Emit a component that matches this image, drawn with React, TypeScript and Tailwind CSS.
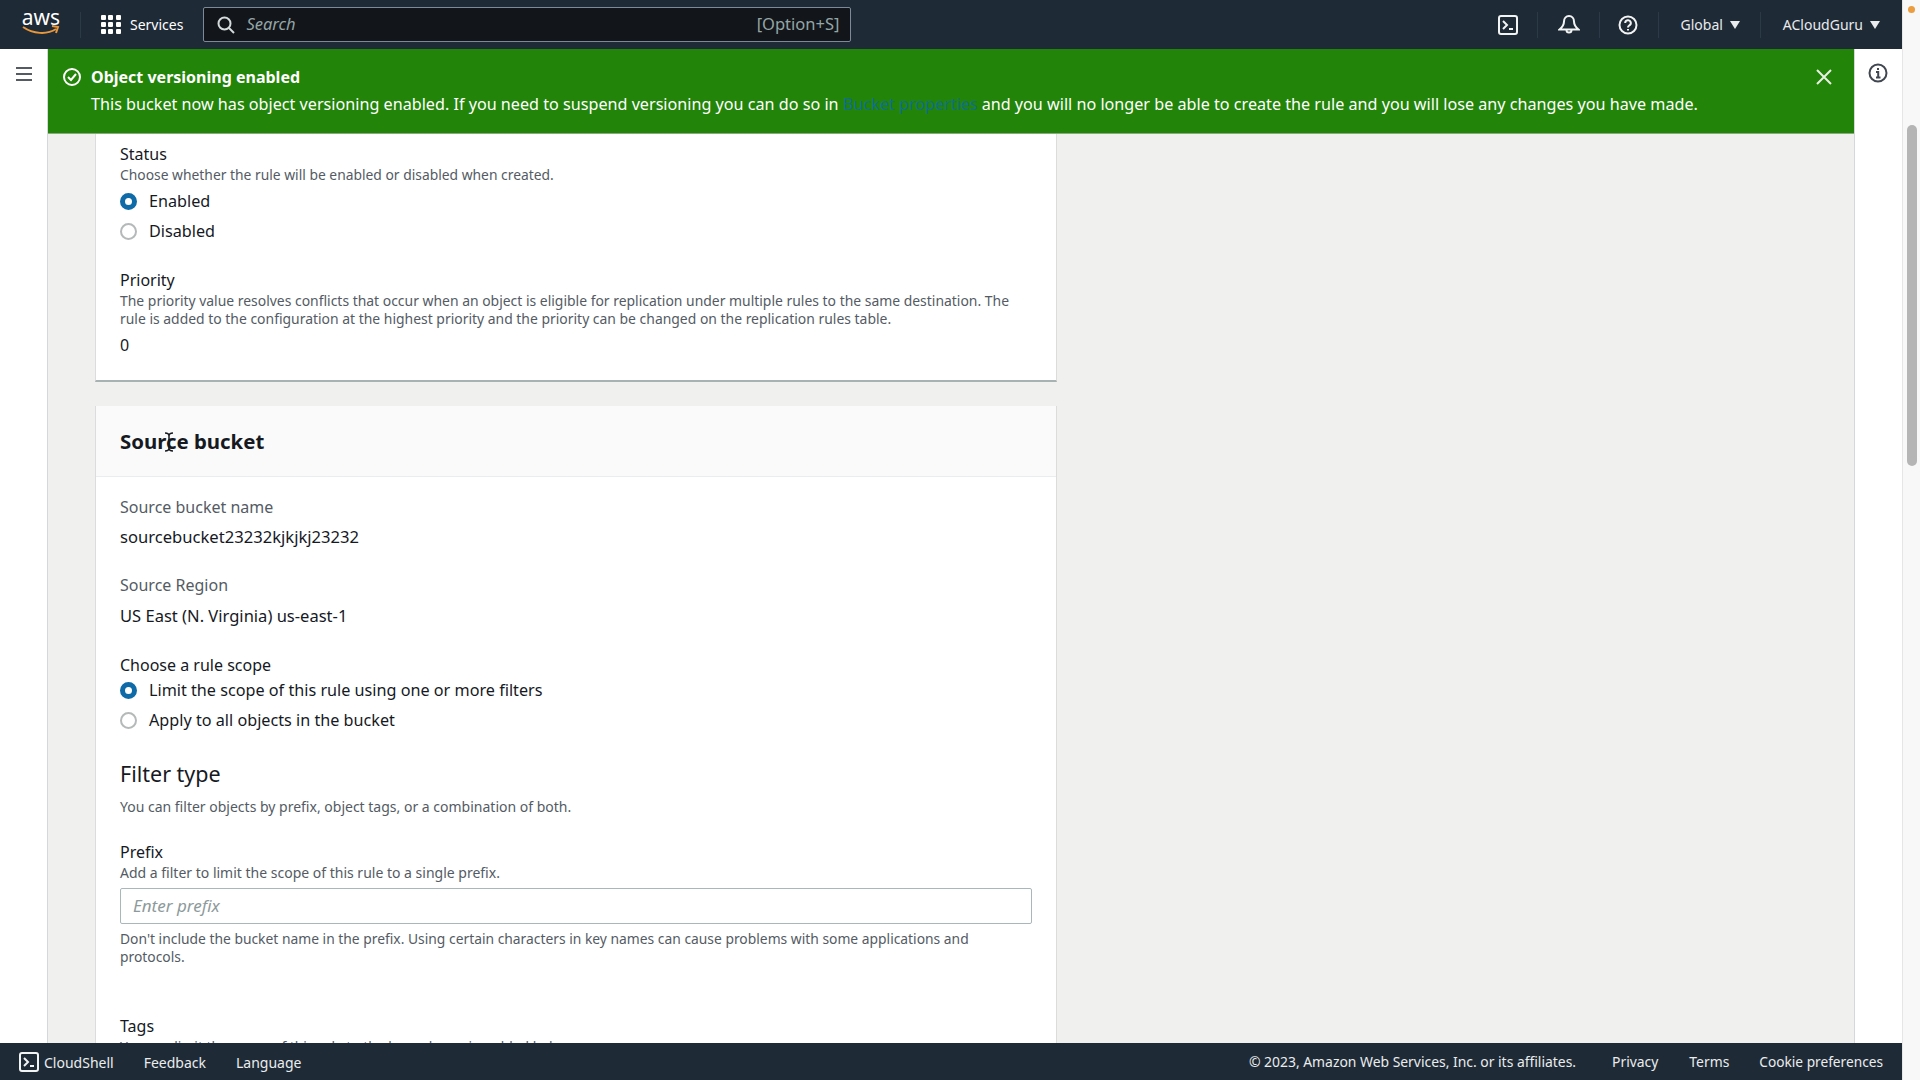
const font = "[font-family:'Noto_Sans',sans-serif]";

function Caret() {
  return (
    <svg width="10" height="8" viewBox="0 0 10 8" className="ml-[7px]">
      <path d="M0 0h10L5 8z" fill="currentColor" />
    </svg>
  );
}

function NavDivider() {
  return <div className="w-px h-[26px] bg-[#2c3947]" />;
}

function Radio({ checked, label }: { checked?: boolean; label: string }) {
  return (
    <div className="flex items-center h-[30px]">
      {checked ? (
        <span className="w-[17px] h-[17px] rounded-full border-[5px] border-[#0f6aa8] bg-white" />
      ) : (
        <span className="w-[17px] h-[17px] rounded-full border-2 border-[#b5b9b9] bg-white" />
      )}
      <span className="ml-[12px] text-[16.2px] leading-[20px] text-[#16191f]">{label}</span>
    </div>
  );
}

function TopNav() {
  return (
    <header className="h-[49px] shrink-0 flex items-center bg-[#1f2a37] text-[#e9ebed] mr-[18px]">
      <div className="w-[80px] flex flex-col items-center shrink-0 pl-[2px]">
        <span className="text-[21px] leading-[17px] text-white -mt-[5px]">aws</span>
        <svg width="38" height="10" viewBox="0 0 38 10" className="-mt-[1px]">
          <path d="M1 2c10 7 24 8 33 2" fill="none" stroke="#e8973a" strokeWidth="2" />
          <path d="M30 1l6 1-2 6" fill="none" stroke="#e8973a" strokeWidth="2" />
        </svg>
      </div>
      <div className="w-px h-[26px] bg-[#2c3947]" />
      <div className="ml-[20px] grid grid-cols-3 gap-[2px] w-[20px]">
        {Array.from({ length: 9 }).map((_, i) => (
          <span key={i} className="w-[5px] h-[5px] bg-white rounded-[1px]" />
        ))}
      </div>
      <span className="ml-[9px] text-[14px] text-white">Services</span>
      <div className="ml-[20px] w-[648px] h-[35px] flex items-center bg-[#12161a] border border-[#7d8998] rounded-[2px] pl-[13px] pr-[11px]">
        <svg width="18" height="18" viewBox="0 0 18 18" fill="none" stroke="#d5dbdb" strokeWidth="2">
          <circle cx="7.5" cy="7.5" r="6" />
          <path d="M12 12l5 5" />
        </svg>
        <span className="ml-[11px] text-[16.5px] italic text-[#95a5a6]">Search</span>
        <span className="ml-auto text-[16.5px] text-[#95a5a6]">[Option+S]</span>
      </div>
      <div className="ml-auto flex items-center">
        <svg width="20" height="20" viewBox="0 0 20 20" fill="none" stroke="#f2f3f3" strokeWidth="2">
          <rect x="1" y="1" width="18" height="18" rx="2" />
          <path d="M5 6l4 4-4 4M11 14h4" />
        </svg>
        <div className="ml-[19px] mr-[20px]"><NavDivider /></div>
        <svg width="22" height="22" viewBox="0 0 22 22" fill="none" stroke="#f2f3f3" strokeWidth="2">
          <path d="M11 2c-3 0-5 2.500-5 5.500 0 3.500-1.500 5.500-4.500 8h19c-3-2.500-4.500-4.500-4.500-8C16 4.500 14 2 11 2z" />
          <path d="M8.500 16a2.500 2.500 0 0 0 5 0" />
        </svg>
        <div className="ml-[19px] mr-[18px]"><NavDivider /></div>
        <svg width="20" height="20" viewBox="0 0 20 20" fill="none" stroke="#f2f3f3" strokeWidth="2">
          <circle cx="10" cy="10" r="8.500" />
          <path d="M7.200 8a2.800 2.800 0 1 1 4 2.500c-.8.500-1.200 1-1.200 2" />
          <path d="M10 14v1.500" />
        </svg>
        <div className="ml-[20px] mr-[22px]"><NavDivider /></div>
        <span className="text-[14px]">Global</span>
        <Caret />
        <div className="ml-[20px] mr-[22px]"><NavDivider /></div>
        <span className="text-[14px]">ACloudGuru</span>
        <Caret />
        <div className="w-[22px]" />
      </div>
    </header>
  );
}

function Banner() {
  return (
    <div className="h-[85px] shrink-0 bg-[#228408] text-white flex border-b border-[#8aa97f]">
      <div className="pl-[14px] pt-[18px]">
        <svg width="20" height="20" viewBox="0 0 20 20" fill="none" stroke="#fff" strokeWidth="2">
          <circle cx="10" cy="10" r="8" />
          <path d="M6 10l3 3 5-6" />
        </svg>
      </div>
      <div className="ml-[9px] pt-[18px] flex-1">
        <div className="text-[16px] leading-[20px] font-bold">Object versioning enabled</div>
        <div className="text-[16.16px] leading-[20px] mt-[7px]">
          This bucket now has object versioning enabled. If you need to suspend versioning you can do so in{" "}
          <span className="text-[#0f6f8c]">Bucket properties</span> and you will no longer be able to create the rule and you will lose any changes you have made.
        </div>
      </div>
      <div className="pt-[19px] pr-[21px]">
        <svg width="18" height="18" viewBox="0 0 18 18" fill="none" stroke="#e7f0e3" strokeWidth="2">
          <path d="M2 2l14 14M16 2L2 16" />
        </svg>
      </div>
    </div>
  );
}

function Content() {
  return (
    <div className="flex-1 min-h-0 overflow-hidden bg-[#f0f0ef] pl-[47px]">
      <div className="w-[962px]">
        <section className="bg-white border-l border-r border-[#dcdcdc] border-b-2 border-b-[#a9b2b3] px-[24px] pt-[9px] h-[248px]">
          <div className="text-[16px] leading-[22px] text-[#16191f]">Status</div>
          <div className="text-[13.85px] leading-[18px] text-[#545b64] mt-[1px]">Choose whether the rule will be enabled or disabled when created.</div>
          <div className="mt-[2px]">
            <Radio checked label="Enabled" />
            <Radio label="Disabled" />
          </div>
          <div className="text-[16px] leading-[22px] text-[#16191f] mt-[23px]">Priority</div>
          <div className="text-[13.93px] leading-[18px] text-[#545b64] mt-[1px] w-[900px]">
            The priority value resolves conflicts that occur when an object is eligible for replication under multiple rules to the same destination. The rule is added to the configuration at the highest priority and the priority can be changed on the replication rules table.
          </div>
          <div className="text-[16px] leading-[22px] text-[#16191f] mt-[6px]">0</div>
        </section>
        <section className="mt-[24px] bg-white border-l border-r border-[#dcdcdc]">
          <div className="h-[71px] flex items-center px-[24px] bg-[#fafafa] border-b border-[#eaeded]">
            <h2 className="text-[20.4px] font-bold text-[#16191f]">Source bucket</h2>
          </div>
          <div className="px-[24px] pt-[19px]">
            <div className="text-[16px] leading-[22px] text-[#545b64]">Source bucket name</div>
            <div className="text-[16.6px] leading-[22px] text-[#16191f] mt-[8px]">sourcebucket23232kjkjkj23232</div>
            <div className="text-[16px] leading-[22px] text-[#545b64] mt-[26px]">Source Region</div>
            <div className="text-[16.55px] leading-[22px] text-[#16191f] mt-[9px]">US East (N. Virginia) us-east-1</div>
            <div className="text-[16px] leading-[22px] text-[#16191f] mt-[27px]">Choose a rule scope</div>
            <div className="-mt-[1px]">
              <Radio checked label="Limit the scope of this rule using one or more filters" />
              <Radio label="Apply to all objects in the bucket" />
            </div>
            <h3 className="text-[21.5px] leading-[30px] text-[#16191f] mt-[24px]">Filter type</h3>
            <div className="text-[14px] leading-[18px] text-[#545b64] mt-[9px]">You can filter objects by prefix, object tags, or a combination of both.</div>
            <div className="text-[16px] leading-[22px] text-[#16191f] mt-[25px]">Prefix</div>
            <div className="text-[14px] leading-[18px] text-[#545b64] mt-[1px]">Add a filter to limit the scope of this rule to a single prefix.</div>
            <div className="mt-[6px] h-[36px] border border-[#aab7b8] rounded-[2px] flex items-center px-[12px]">
              <span className="text-[17px] italic text-[#8d9a9b]">Enter prefix</span>
            </div>
            <div className="text-[13.85px] leading-[18px] text-[#545b64] mt-[6px] w-[860px]">
              Don't include the bucket name in the prefix. Using certain characters in key names can cause problems with some applications and protocols.
            </div>
            <div className="text-[16px] leading-[22px] text-[#16191f] mt-[49px]">Tags</div>
            <div className="text-[13.85px] leading-[18px] text-[#545b64] mt-[1px]">You can limit the scope of this rule to the key value pairs added below.</div>
          </div>
        </section>
      </div>
    </div>
  );
}

function Footer() {
  return (
    <footer className="h-[37px] shrink-0 mr-[18px] bg-[#1f2a37] text-[#eaeded] text-[14px] flex items-center pl-[19px] pr-[19px] pt-[1px]">
      <svg width="20" height="20" viewBox="0 0 20 20" fill="none" stroke="#f2f3f3" strokeWidth="2">
        <rect x="1" y="1" width="18" height="18" rx="2" />
        <path d="M5 6l4 4-4 4M11 14h4" />
      </svg>
      <span className="ml-[5px]">CloudShell</span>
      <span className="ml-[30px]">Feedback</span>
      <span className="ml-[30px]">Language</span>
      <span className="ml-auto text-[13.9px]">© 2023, Amazon Web Services, Inc. or its affiliates.</span>
      <span className="ml-[36px] text-[13.9px]">Privacy</span>
      <span className="ml-[31px] text-[13.9px]">Terms</span>
      <span className="ml-[30px] text-[13.7px]">Cookie preferences</span>
    </footer>
  );
}

export default function App() {
  return (
    <div className={`h-screen w-full overflow-hidden flex flex-col relative bg-white ${font}`}>
      <TopNav />
      <div className="flex-1 min-h-0 flex mr-[18px]">
        <div className="w-[48px] shrink-0 bg-white border-r border-[#d5d8d8] flex justify-center pt-[17px]">
          <svg width="18" height="16" viewBox="0 0 18 16" stroke="#545b64" strokeWidth="2">
            <path d="M1 2h16M1 8h16M1 14h16" />
          </svg>
        </div>
        <main className="flex-1 min-w-0 flex flex-col">
          <Banner />
          <Content />
        </main>
        <div className="w-[48px] shrink-0 bg-white border-l border-[#d5d8d8] flex justify-center pt-[14px] pr-[2px]">
          <svg width="20" height="20" viewBox="0 0 20 20" fill="none" stroke="#414750" strokeWidth="2">
            <circle cx="10" cy="10" r="8.500" />
            <path d="M8 9h2.200v5M8 14.500h4.500M10 5v2" />
          </svg>
        </div>
      </div>
      <Footer />
      {/* text cursor sitting on the heading */}
      <svg width="10" height="20" viewBox="0 0 10 20" className="absolute left-[164px] top-[432px]" fill="none" stroke="#16191f" strokeWidth="1.500">
        <path d="M1 1c2 0 4 1 4 3v12c0 2-2 3-4 3M9 1c-2 0-4 1-4 3M9 19c-2 0-4-1-4-3" />
      </svg>
      <div className="absolute right-0 top-0 bottom-0 w-[18px] bg-[#f8f8f8] border-l border-[#e6e6e6]">
        <div className="absolute left-[5px] top-[6px] w-[7px] h-[7px] rounded-full bg-[#eb9d3f]" />
        <div className="absolute left-[4px] top-[125px] w-[10px] h-[341px] rounded-full bg-[#b5b5b5]" />
      </div>
    </div>
  );
}
